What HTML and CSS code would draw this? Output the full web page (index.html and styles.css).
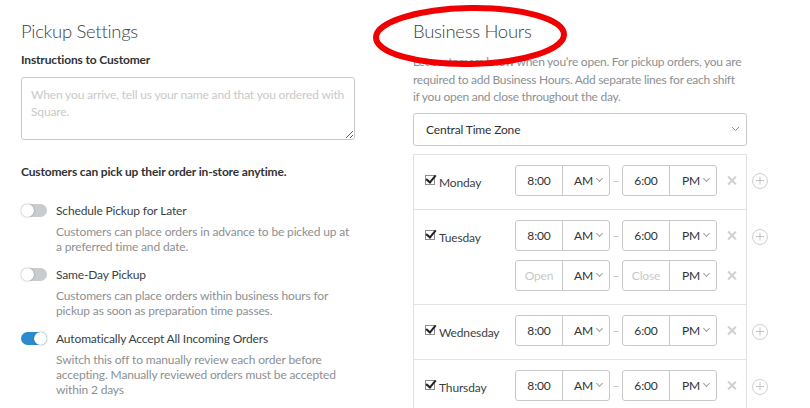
FILE: index.html
```html
<!DOCTYPE html>
<html lang="en">
<head>
  <meta charset="UTF-8">
  <title>Pickup Settings</title>
  <link rel="stylesheet" href="styles.css">
</head>
<body>
  <div class="page">
    <section class="col col-left">
      <h2 class="title">Pickup Settings</h2>

      <label class="field-label" for="instructions">Instructions to Customer</label>
      <textarea id="instructions" class="notes" placeholder="When you arrive, tell us your name and that you ordered with Square."></textarea>

      <p class="lead">Customers can pick up their order in-store anytime.</p>

      <div class="option">
        <span class="toggle"></span>
        <div class="option-text">
          <div class="option-name">Schedule Pickup for Later</div>
          <div class="option-desc">Customers can place orders in advance to be picked up at a preferred time and date.</div>
        </div>
      </div>

      <div class="option">
        <span class="toggle"></span>
        <div class="option-text">
          <div class="option-name">Same-Day Pickup</div>
          <div class="option-desc">Customers can place orders within business hours for pickup as soon as preparation time passes.</div>
        </div>
      </div>

      <div class="option">
        <span class="toggle on"></span>
        <div class="option-text">
          <div class="option-name">Automatically Accept All Incoming Orders</div>
          <div class="option-desc">Switch this off to manually review each order before accepting. Manually reviewed orders must be accepted within 2 days</div>
        </div>
      </div>
    </section>

    <section class="col col-right">
      <h2 class="title">Business Hours</h2>
      <svg class="circle-mark" width="204" height="70" viewBox="0 0 204 70">
        <ellipse cx="102" cy="35" rx="94" ry="28" fill="none" stroke="#f00000" stroke-width="6" transform="rotate(-1 102 35)"/>
      </svg>

      <p class="intro">Let customers know when you’re open. For pickup orders, you are required to add Business Hours. Add separate lines for each shift if you open and close throughout the day.</p>

      <div class="select">
        <span>Central Time Zone</span>
        <svg class="chev" width="9" height="6" viewBox="0 0 9 6"><path d="M1 1l3.5 3.5L8 1" fill="none" stroke="#999" stroke-width="1"/></svg>
      </div>

      <div class="hours">
        <div class="day">
          <div class="day-body">
            <div class="day-name"><span class="check"></span>Monday</div>
            <div class="shifts">
              <div class="shift">
                <div class="time"><span class="hh">8:00</span><span class="ap">AM<i class="chev-s"></i></span></div>
                <span class="dash">–</span>
                <div class="time"><span class="hh">6:00</span><span class="ap">PM<i class="chev-s"></i></span></div>
                <span class="remove"></span>
              </div>
            </div>
          </div>
          <span class="add"></span>
        </div>

        <div class="day">
          <div class="day-body">
            <div class="day-name"><span class="check"></span>Tuesday</div>
            <div class="shifts">
              <div class="shift">
                <div class="time"><span class="hh">8:00</span><span class="ap">AM<i class="chev-s"></i></span></div>
                <span class="dash">–</span>
                <div class="time"><span class="hh">6:00</span><span class="ap">PM<i class="chev-s"></i></span></div>
                <span class="remove"></span>
              </div>
              <div class="shift">
                <div class="time"><span class="hh empty">Open</span><span class="ap">AM<i class="chev-s"></i></span></div>
                <span class="dash">–</span>
                <div class="time"><span class="hh empty">Close</span><span class="ap">PM<i class="chev-s"></i></span></div>
                <span class="remove"></span>
              </div>
            </div>
          </div>
          <span class="add"></span>
        </div>

        <div class="day">
          <div class="day-body">
            <div class="day-name"><span class="check"></span>Wednesday</div>
            <div class="shifts">
              <div class="shift">
                <div class="time"><span class="hh">8:00</span><span class="ap">AM<i class="chev-s"></i></span></div>
                <span class="dash">–</span>
                <div class="time"><span class="hh">6:00</span><span class="ap">PM<i class="chev-s"></i></span></div>
                <span class="remove"></span>
              </div>
            </div>
          </div>
          <span class="add"></span>
        </div>

        <div class="day">
          <div class="day-body">
            <div class="day-name"><span class="check"></span>Thursday</div>
            <div class="shifts">
              <div class="shift">
                <div class="time"><span class="hh">8:00</span><span class="ap">AM<i class="chev-s"></i></span></div>
                <span class="dash">–</span>
                <div class="time"><span class="hh">6:00</span><span class="ap">PM<i class="chev-s"></i></span></div>
                <span class="remove"></span>
              </div>
            </div>
          </div>
          <span class="add"></span>
        </div>
      </div>
    </section>
  </div>
</body>
</html>
```

FILE: styles.css
```css
body {
  margin: 0;
  font-family: Lato, "Liberation Sans", sans-serif;
  font-size: 12px;
  letter-spacing: -0.15px;
  color: #333;
  background: #fff;
  overflow: hidden;
}
.page {
  display: flex;
  gap: 58px;
  padding: 18px 0 0 21px;
}
.col {
  width: 334px;
  flex: none;
}
.col-right {
  position: relative;
}
.title {
  margin: 0;
  font-size: 18.5px;
  font-weight: 300;
  letter-spacing: -0.3px;
  line-height: 26px;
  color: #3c4145;
}

/* left column */
.field-label {
  display: block;
  margin-top: 8px;
  font-weight: 700;
  line-height: 16px;
  color: #2f3336;
}
.notes {
  display: block;
  width: 334px;
  height: 63px;
  margin-top: 9px;
  padding: 8px 9px;
  box-sizing: border-box;
  border: 1px solid #c9c9c9;
  border-radius: 3px;
  font-family: inherit;
  font-size: 12px;
  letter-spacing: inherit;
  line-height: 17px;
  resize: vertical;
}
.notes::placeholder {
  color: #c9c9c9;
}
.lead {
  margin: 24px 0 0;
  font-weight: 700;
  line-height: 16px;
  color: #2f3336;
}
.option {
  display: flex;
  gap: 9px;
  margin-top: 23px;
}
.option + .option {
  margin-top: 13px;
}
.toggle {
  position: relative;
  flex: none;
  width: 26px;
  height: 13px;
  margin-top: 1px;
  border-radius: 7px;
  background: #c9cccf;
}
.toggle::after {
  content: "";
  position: absolute;
  left: 0;
  top: 0;
  width: 13px;
  height: 13px;
  border-radius: 50%;
  background: #fff;
  box-shadow: 0 0 2px rgba(0, 0, 0, 0.35);
}
.toggle.on {
  background: #2b8bd0;
}
.toggle.on::after {
  left: 13px;
}
.option-name {
  line-height: 15px;
  color: #3a3f44;
}
.option-desc {
  margin-top: 6px;
  line-height: 15px;
  color: #8c9094;
}

/* right column */
.circle-mark {
  position: absolute;
  left: -45px;
  top: -17px;
}
.intro {
  margin: 9px 0 0;
  padding-right: 4px;
  letter-spacing: -0.26px;
  line-height: 17.5px;
  color: #8c9094;
}
.select {
  display: flex;
  align-items: center;
  justify-content: space-between;
  height: 31px;
  margin-top: 7px;
  padding: 0 6px 0 12px;
  border: 1px solid #c9c9c9;
  border-radius: 3px;
  color: #2f3336;
}
.hours {
  margin-top: 8px;
}
.day {
  display: flex;
  align-items: flex-start;
}
.day-body {
  display: flex;
  flex: none;
  width: 334px;
  box-sizing: border-box;
  padding: 10px 0 13px 11px;
  border: 1px solid #e3e3e3;
  border-top: 0;
}
.day:first-child .day-body {
  border-top: 1px solid #e3e3e3;
}
.day-name {
  display: flex;
  align-items: center;
  width: 90px;
  height: 31px;
  padding-top: 5px;
  box-sizing: border-box;
  color: #3a3f44;
}
.check {
  position: relative;
  width: 8px;
  height: 8px;
  margin-right: 4px;
  margin-top: -5px;
  border: 1px solid #8c8c8c;
  background: #fff;
}
.check::after {
  content: "";
  position: absolute;
  left: 2px;
  top: -3px;
  width: 4px;
  height: 8px;
  border: solid #222;
  border-width: 0 2px 2px 0;
  transform: rotate(40deg);
}
.shifts {
  display: flex;
  flex-direction: column;
  gap: 9px;
}
.shift {
  display: flex;
  align-items: center;
  height: 31px;
}
.time {
  display: flex;
  height: 31px;
  box-sizing: border-box;
  border: 1px solid #c9c9c9;
  border-radius: 3px;
  color: #2f3336;
}
.hh {
  display: flex;
  align-items: center;
  justify-content: center;
  width: 46px;
}
.hh.empty {
  color: #c9c9c9;
}
.ap {
  display: flex;
  align-items: center;
  justify-content: flex-end;
  width: 47px;
  padding-right: 7px;
  box-sizing: border-box;
  border-left: 1px solid #c9c9c9;
}
.chev-s {
  width: 4px;
  height: 4px;
  margin: -3px 0 0 4px;
  border: solid #a0a0a0;
  border-width: 0 1px 1px 0;
  transform: rotate(45deg);
}
.dash {
  width: 12px;
  text-align: center;
  color: #c0c0c0;
}
.remove {
  position: relative;
  width: 9px;
  height: 9px;
  margin-left: 10px;
}
.remove::before,
.remove::after {
  content: "";
  position: absolute;
  left: 4px;
  top: -1px;
  width: 1.6px;
  height: 11px;
  background: #d0d0d0;
  transform: rotate(45deg);
}
.remove::after {
  transform: rotate(-45deg);
}
.add {
  position: relative;
  flex: none;
  width: 14px;
  height: 14px;
  margin: 19px 0 0 5px;
  border: 1px solid #cfcfcf;
  border-radius: 50%;
}
.add::before,
.add::after {
  content: "";
  position: absolute;
  left: 3px;
  top: 6.5px;
  width: 8px;
  height: 1px;
  background: #c4c4c4;
}
.add::after {
  transform: rotate(90deg);
}
```
